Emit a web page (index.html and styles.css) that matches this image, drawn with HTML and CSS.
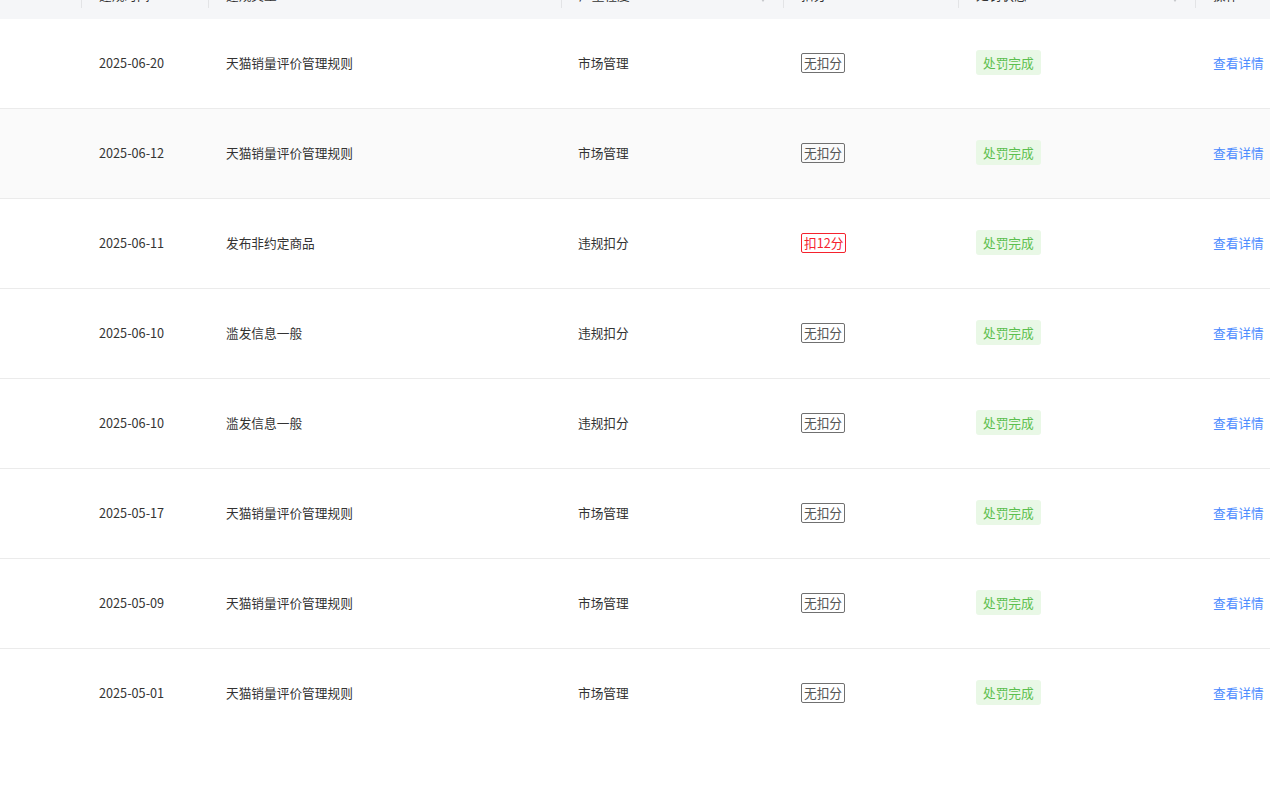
FILE: index.html
```html
<!DOCTYPE html>
<html lang="zh-CN">
<head>
<meta charset="utf-8">
<title>违规记录</title>
<link rel="stylesheet" href="styles.css">
</head>
<body>
<div class="wrap">
<table class="grid">
  <colgroup>
    <col class="c0"><col class="c1"><col class="c2"><col class="c3"><col class="c4"><col class="c5"><col class="c6">
  </colgroup>
  <thead>
    <tr>
      <th></th>
      <th class="sep"><div class="th-in">违规时间</div></th>
      <th class="sep"><div class="th-in">违规类型</div></th>
      <th class="sep"><div class="th-in">严重程度<span class="sort"><i class="up"></i><i class="down"></i></span></div></th>
      <th class="sep"><div class="th-in">扣分</div></th>
      <th class="sep"><div class="th-in">处罚状态<span class="sort"><i class="up"></i><i class="down"></i></span></div></th>
      <th class="sep"><div class="th-in">操作</div></th>
    </tr>
  </thead>
  <tbody>
    <tr><td></td><td>2025-06-20</td><td>天猫销量评价管理规则</td><td>市场管理</td><td><span class="pt">无扣分</span></td><td><span class="st">处罚完成</span></td><td><a class="lnk">查看详情</a></td></tr>
    <tr class="hover"><td></td><td>2025-06-12</td><td>天猫销量评价管理规则</td><td>市场管理</td><td><span class="pt">无扣分</span></td><td><span class="st">处罚完成</span></td><td><a class="lnk">查看详情</a></td></tr>
    <tr><td></td><td>2025-06-11</td><td>发布非约定商品</td><td>违规扣分</td><td><span class="pt red">扣12分</span></td><td><span class="st">处罚完成</span></td><td><a class="lnk">查看详情</a></td></tr>
    <tr><td></td><td>2025-06-10</td><td>滥发信息一般</td><td>违规扣分</td><td><span class="pt">无扣分</span></td><td><span class="st">处罚完成</span></td><td><a class="lnk">查看详情</a></td></tr>
    <tr><td></td><td>2025-06-10</td><td>滥发信息一般</td><td>违规扣分</td><td><span class="pt">无扣分</span></td><td><span class="st">处罚完成</span></td><td><a class="lnk">查看详情</a></td></tr>
    <tr><td></td><td>2025-05-17</td><td>天猫销量评价管理规则</td><td>市场管理</td><td><span class="pt">无扣分</span></td><td><span class="st">处罚完成</span></td><td><a class="lnk">查看详情</a></td></tr>
    <tr><td></td><td>2025-05-09</td><td>天猫销量评价管理规则</td><td>市场管理</td><td><span class="pt">无扣分</span></td><td><span class="st">处罚完成</span></td><td><a class="lnk">查看详情</a></td></tr>
    <tr class="last"><td></td><td>2025-05-01</td><td>天猫销量评价管理规则</td><td>市场管理</td><td><span class="pt">无扣分</span></td><td><span class="st">处罚完成</span></td><td><a class="lnk">查看详情</a></td></tr>
  </tbody>
</table>
</div>
</body>
</html>
```

FILE: styles.css
```css
html, body {
  margin: 0;
  padding: 0;
  background: #fff;
  overflow: hidden;
}
body {
  font-family: "Noto Sans CJK SC", "Noto Sans", sans-serif;
  font-size: 12.7px;
  color: #333;
}
.wrap {
  width: 1270px;
  height: 786px;
  overflow: hidden;
}
.grid {
  margin-top: -25px;
  width: 1300px;
  table-layout: fixed;
  border-collapse: collapse;
  border-spacing: 0;
}
.c0 { width: 81px; }
.c1 { width: 127px; }
.c2 { width: 353px; }
.c3 { width: 222px; }
.c4 { width: 175px; }
.c5 { width: 237px; }
.c6 { width: 105px; }

thead th {
  height: 44px;
  background: #f5f6f8;
  padding: 0;
  font-weight: normal;
  text-align: left;
  color: #333;
  position: relative;
}
th.sep::before {
  content: "";
  position: absolute;
  left: 0;
  top: 9px;
  width: 1px;
  height: 24px;
  background: #e3e4e6;
}
.th-in {
  display: flex;
  align-items: center;
  justify-content: space-between;
  padding: 0 18px 0 18px;
  line-height: 20px;
  transform: translateY(-2px);
}
.sort {
  display: flex;
  flex-direction: column;
  gap: 1px;
  transform: translateY(3px);
}
.sort i {
  display: block;
  width: 0;
  height: 0;
  border-left: 2.5px solid transparent;
  border-right: 2.5px solid transparent;
}
.sort .up { border-bottom: 3px solid #c4c6ca; }
.sort .down { border-top: 3px solid #c4c6ca; }

tbody td {
  height: 87px;
  padding: 0 0 2px 18px;
  border-bottom: 1px solid #ebebeb;
  white-space: nowrap;
  vertical-align: middle;
}
tbody td:first-child { padding: 0 0 2px 0; }
tbody tr td:nth-child(4) { padding-left: 17px; }
tbody tr.hover td { background: #fafafa; }
tbody tr.last td { border-bottom: none; }

.pt {
  display: inline-block;
  border: 1px solid #707070;
  border-radius: 2px;
  padding: 0 2px;
  line-height: 18px;
  color: #555;
}
.pt.red {
  border-color: #f5222d;
  color: #f5222d;
}
.st {
  display: inline-block;
  background: #e9f8e6;
  color: #5cbf4e;
  border-radius: 3px;
  padding: 0 7px;
  line-height: 25px;
}
.lnk {
  color: #4d8cff;
  text-decoration: none;
}
```
